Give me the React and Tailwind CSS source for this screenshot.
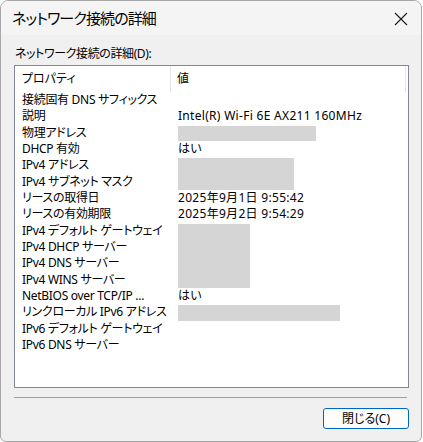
import React from 'react';

const FONT = { fontFamily: '"Noto Sans", "Noto Sans CJK JP", sans-serif', fontFeatureSettings: '"palt"' };

// value: string, mask: [width, rows] for a hidden value
const ROWS = [
  { name: '接続固有 DNS サフィックス', value: '' },
  { name: '説明', value: 'Intel(R) Wi-Fi 6E AX211 160MHz' },
  { name: '物理アドレス', mask: [138, 1] },
  { name: 'DHCP 有効', value: 'はい' },
  { name: 'IPv4 アドレス', mask: [116, 2] },
  { name: 'IPv4 サブネット マスク' },
  { name: 'リースの取得日', value: '2025年9月1日 9:55:42' },
  { name: 'リースの有効期限', value: '2025年9月2日 9:54:29' },
  { name: 'IPv4 デフォルト ゲートウェイ', mask: [72, 4] },
  { name: 'IPv4 DHCP サーバー' },
  { name: 'IPv4 DNS サーバー' },
  { name: 'IPv4 WINS サーバー' },
  { name: 'NetBIOS over TCP/IP ...', value: 'はい' },
  { name: 'リンクローカル IPv6 アドレス', mask: [162, 1] },
  { name: 'IPv6 デフォルト ゲートウェイ', value: '' },
  { name: 'IPv6 DNS サーバー', value: '' },
];

const App = () => {
  return (
    <div className="w-[423px] h-[442px] bg-white" style={FONT}>
      <div className="w-[422px] h-[442px] rounded-t-lg rounded-b-md border border-[#a8a8a8] bg-[#f0f0f0] overflow-hidden flex flex-col text-black">
        {/* title bar */}
        <div className="h-[34px] bg-[#f4f4f4] flex items-center justify-between pl-[11px] pr-[13px] shrink-0">
          <span className="text-[15px] leading-none tracking-[-0.9px]">ネットワーク接続の詳細</span>
          <svg width="14" height="14" viewBox="0 0 14 14" className="mt-[1px]">
            <path d="M1 1 L13 13 M13 1 L1 13" stroke="#1a1a1a" strokeWidth="1.1" fill="none" />
          </svg>
        </div>

        {/* body */}
        <div className="flex-1 flex flex-col pl-[13px] pr-[12px]">
          <div className="text-[12px] leading-none mt-[13px] ml-[1px] tracking-[-0.4px]">ネットワーク接続の詳細(D):</div>

          <div className="mt-[5px] h-[323px] border border-[#828790] bg-white text-[12px] leading-none">
            {/* header */}
            <div className="flex h-[26px]">
              <div className="w-[156px] border-r border-[#e5e5e5] pl-[7px] flex items-center">プロパティ</div>
              <div className="flex-1 border-r border-[#e5e5e5] mr-[2px] pl-[6px] flex items-center">値</div>
            </div>
            {/* rows */}
            <div className="grid grid-cols-[156px_1fr] auto-rows-[16.33px]">
              {ROWS.map((r, i) => (
                <React.Fragment key={i}>
                  <div className="pl-[7px] pr-[4px] flex items-center whitespace-nowrap overflow-hidden tracking-[-0.3px]" style={{ gridRow: i + 1, gridColumn: 1 }}>
                    {r.name}
                  </div>
                  {r.mask ? (
                    <div className="pl-[7px] pt-[1px]" style={{ gridRow: `${i + 1} / span ${r.mask[1]}`, gridColumn: 2 }}>
                      <div className="bg-[#d5d5d5] h-full" style={{ width: r.mask[0] }} />
                    </div>
                  ) : r.value !== undefined ? (
                    <div className="pl-[7px] flex items-center whitespace-nowrap tracking-[0.3px]" style={{ gridRow: i + 1, gridColumn: 2 }}>
                      {r.value}
                    </div>
                  ) : null}
                </React.Fragment>
              ))}
            </div>
          </div>

          <div className="mt-[9px] h-px bg-[#a0a0a0] mr-[2px]" />

          <div className="flex justify-end mt-[10px]">
            <button className="w-[86px] h-[21px] rounded-[3px] border border-[#0067c0] bg-[#fdfdfd] text-[12px] leading-none flex items-center justify-center">
              閉じる(C)
            </button>
          </div>
        </div>
      </div>
    </div>
  );
};

export default App;
